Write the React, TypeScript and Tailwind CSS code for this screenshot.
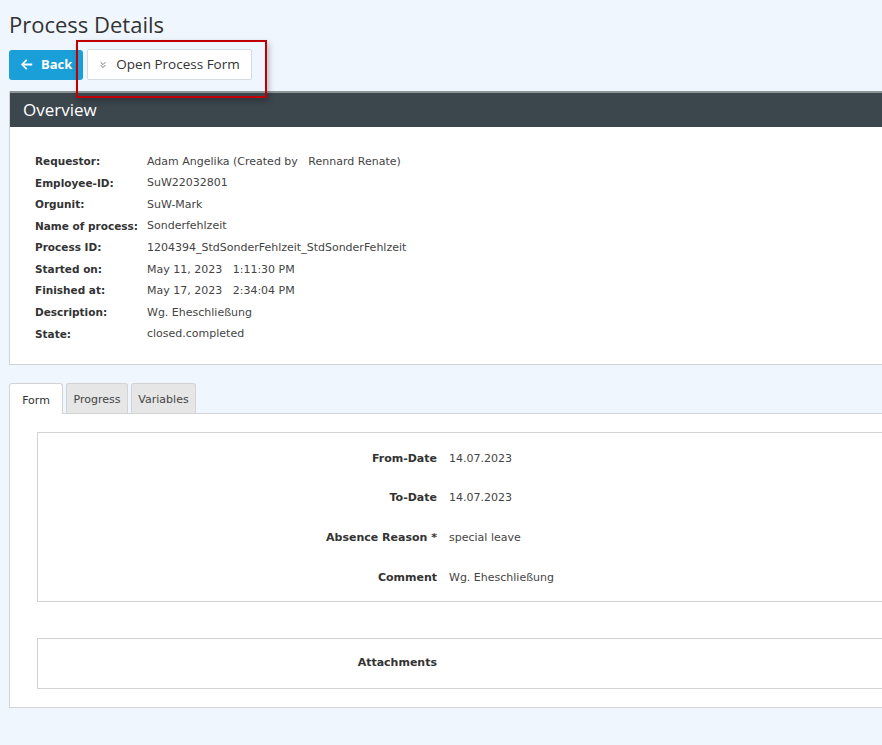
import { ChevronsDown } from 'lucide-react';

const overview: [string, string][] = [
  ['Requestor:', 'Adam Angelika (Created by \u00a0\u00a0Rennard Renate)'],
  ['Employee-ID:', 'SuW22032801'],
  ['Orgunit:', 'SuW-Mark'],
  ['Name of process:', 'Sonderfehlzeit'],
  ['Process ID:', '1204394_StdSonderFehlzeit_StdSonderFehlzeit'],
  ['Started on:', 'May 11, 2023 \u00a0\u00a01:11:30 PM'],
  ['Finished at:', 'May 17, 2023 \u00a0\u00a02:34:04 PM'],
  ['Description:', 'Wg. Eheschließung'],
  ['State:', 'closed.completed'],
];

const formRows: [string, string][] = [
  ['From-Date', '14.07.2023'],
  ['To-Date', '14.07.2023'],
  ['Absence Reason *', 'special leave'],
  ['Comment', 'Wg. Eheschließung'],
];

function ArrowLeftIcon() {
  return (
    <svg viewBox="0 0 16 16" className="h-[13px] w-[13px]" fill="currentColor">
      <path d="M7.6 1.6 9 3 5.1 6.9H15v2.2H5.1L9 13l-1.4 1.4L1.2 8z" />
    </svg>
  );
}

export default function App() {
  return (
    <div className="min-h-[745px] w-[882px] overflow-hidden bg-[#f0f6fd] pl-[9px] text-[#333] [font-family:'DejaVu_Sans',Verdana,sans-serif]">
      <h1 className="pt-[9px] text-[22px] leading-[30px] text-[#333] [font-family:'Open_Sans',sans-serif]">
        Process Details
      </h1>

      <div className="relative mt-[10px] flex items-center gap-[5px]">
        <button className="flex h-[30px] items-center gap-[8px] rounded-[3px] bg-[#1a9fd8] px-[11px] text-[13px] font-bold text-white [font-family:'Open_Sans',sans-serif]">
          <ArrowLeftIcon />
          Back
        </button>
        <button className="-ml-px flex h-[31px] items-center gap-[8px] rounded-[2px] border border-[#d6dbe0] bg-white pl-[10px] pr-[11px] text-[13.5px] text-[#333] [font-family:'Open_Sans',sans-serif]">
          <ChevronsDown size={10} strokeWidth={2} className="text-[#555]" />
          Open Process Form
        </button>
        <div className="pointer-events-none absolute left-[67px] top-[-9px] h-[58px] w-[191px] border-2 border-[#c00000] shadow-[2px_3px_6px_rgba(0,0,0,0.25)]" />
      </div>

      <div className="mt-[11px] w-[900px] border-l border-b border-[#cfd3d6] bg-white">
        <div className="flex h-[36px] items-center border-t-2 border-[#8e9599] bg-[#3c464d] px-[13px] text-[17px] text-white [font-family:'Open_Sans',sans-serif]">
          Overview
        </div>
        <div className="px-[25px] pt-[24px] pb-[19px] text-[11px]">
          {overview.map(([k, v]) => (
            <div key={k} className="flex h-[21.6px] items-center">
              <span className="w-[112px] text-[10.5px] font-bold text-[#333]">{k}</span>
              <span className="whitespace-pre text-[#444]">{v}</span>
            </div>
          ))}
        </div>
      </div>

      <div className="mt-[18px] flex items-end gap-[3px] text-[11px]">
        <div className="relative z-10 -mb-px flex h-[31px] w-[54px] items-center justify-center rounded-t-[3px] border border-b-0 border-[#d3d3d3] bg-white pt-[4px] text-[#333]">
          Form
        </div>
        <div className="flex h-[30px] w-[62px] items-center justify-center rounded-t-[3px] border border-b-0 border-[#d3d3d3] bg-[#e6e6e6] pt-[3px] text-[#444]">
          Progress
        </div>
        <div className="flex h-[30px] w-[65px] items-center justify-center rounded-t-[3px] border border-b-0 border-[#d3d3d3] bg-[#e6e6e6] pt-[3px] text-[#444]">
          Variables
        </div>
      </div>

      <div className="w-[900px] border border-[#d3d3d3] bg-white pt-[18px] pb-[18px] pl-[27px] text-[11px]">
        <div className="border border-[#d3d3d3] pt-[6px] pb-[3px]">
          {formRows.map(([k, v]) => (
            <div key={k} className="flex h-[39.6px] items-center">
              <span className="w-[411px] pr-[12px] text-right font-bold text-[#333]">{k}</span>
              <span className="text-[#444]">{v}</span>
            </div>
          ))}
        </div>
        <div className="mt-[36px] flex h-[51px] items-center border border-[#d3d3d3]">
          <span className="w-[411px] pr-[12px] text-right font-bold text-[#333]">Attachments</span>
        </div>
      </div>
    </div>
  );
}
